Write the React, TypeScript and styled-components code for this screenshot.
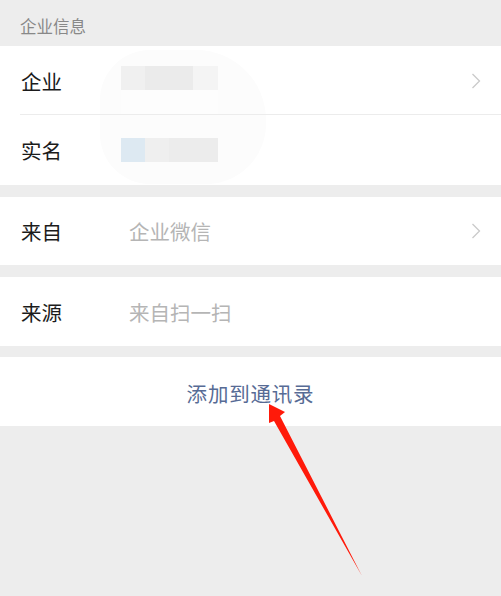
import styled, { createGlobalStyle } from 'styled-components';

const GlobalStyle = createGlobalStyle`
  html, body {
    margin: 0;
    padding: 0;
    background: #ededed;
  }
  body {
    font-family: 'Noto Sans CJK SC', 'Noto Sans', sans-serif;
  }
`;

const Page = styled.div`
  position: relative;
  width: 501px;
  height: 596px;
  overflow: hidden;
  background: #ededed;
`;

const SectionTitle = styled.div`
  height: 46px;
  display: flex;
  align-items: center;
  padding: 6px 0 0 20px;
  box-sizing: border-box;
  font-size: 16.5px;
  color: #888;
`;

const Group = styled.div<{ gapAfter?: number }>`
  position: relative;
  background: #fff;
  margin-bottom: ${({ gapAfter }) => gapAfter ?? 12}px;
`;

const Row = styled.div<{ h?: number; divider?: boolean }>`
  height: ${({ h }) => h ?? 69}px;
  display: flex;
  align-items: center;
  padding: 0 20px 0 21px;
  position: relative;
  box-sizing: border-box;
  ${({ divider }) =>
    divider &&
    `&::after {
      content: '';
      position: absolute;
      left: 20px;
      right: 0;
      bottom: 0;
      height: 1px;
      background: #ececec;
    }`}
`;

const Label = styled.div`
  width: 100px;
  font-size: 20.5px;
  color: #1b1b1b;
  flex-shrink: 0;
`;

const Value = styled.div`
  flex: 1;
  padding-left: 8px;
  font-size: 20.5px;
  color: #b5b5b5;
`;

const Mosaic = styled.div<{ top?: boolean }>`
  flex: 1;
  display: flex;
  flex-direction: column;
  align-self: stretch;
  justify-content: ${({ top }) => (top ? 'flex-start' : 'center')};
  padding-top: ${({ top }) => (top ? 20 : 0)}px;
  position: relative;
`;

const MosaicLine = styled.div<{ fill?: string; h?: number }>`
  display: flex;
  flex-shrink: 0;
  height: ${({ h }) => h ?? 24}px;
  width: 97px;
  background: ${({ fill }) => fill ?? 'transparent'};
`;

const Cell = styled.div<{ w: number; c: string }>`
  width: ${({ w }) => w}px;
  background: ${({ c }) => c};
`;

const Blob = styled.div`
  position: absolute;
  left: 100px;
  top: 4px;
  width: 166px;
  height: 134px;
  border-radius: 50px 70px 60px 50px;
  background: #fcfcfc;
`;

const Chevron = styled.svg`
  width: 10px;
  height: 16px;
`;

const AddButton = styled.div`
  height: 69px;
  background: #fff;
  display: flex;
  align-items: center;
  justify-content: center;
  padding-top: 2px;
  box-sizing: border-box;
  font-size: 20.5px;
  color: #576b95;
  letter-spacing: 0.8px;
`;

const Arrow = styled.svg`
  position: absolute;
  left: 0;
  top: 0;
  width: 501px;
  height: 596px;
  pointer-events: none;
`;

const ChevronIcon = () => (
  <Chevron viewBox="0 0 10 16">
    <path d="M1.5 1 L8.5 8 L1.5 15" fill="none" stroke="#cacaca" strokeWidth="1.3" />
  </Chevron>
);

export default function App() {
  return (
    <Page>
      <GlobalStyle />
      <SectionTitle>企业信息</SectionTitle>
      <Group>
        <Blob />
        <Row divider>
          <Label>企业</Label>
          <Mosaic top>
            <MosaicLine>
              <Cell w={24} c="#f0f0f0" />
              <Cell w={48} c="#ebebeb" />
              <Cell w={25} c="#f4f4f4" />
            </MosaicLine>
            <MosaicLine fill="#fdfdfd" h={25} />
          </Mosaic>
          <ChevronIcon />
        </Row>
        <Row h={70}>
          <Label>实名</Label>
          <Mosaic>
            <MosaicLine>
              <Cell w={24} c="#dde9f2" />
              <Cell w={24} c="#efefef" />
              <Cell w={49} c="#ececec" />
            </MosaicLine>
          </Mosaic>
        </Row>
      </Group>
      <Group>
        <Row h={68}>
          <Label>来自</Label>
          <Value>企业微信</Value>
          <ChevronIcon />
        </Row>
      </Group>
      <Group gapAfter={11}>
        <Row>
          <Label>来源</Label>
          <Value>来自扫一扫</Value>
        </Row>
      </Group>
      <AddButton>添加到通讯录</AddButton>
      <Arrow viewBox="0 0 501 596">
        <path d="M269 404 L285 412 L280 416 L362 576 L274 421 L269 423 Z" fill="#ff1a0a" />
      </Arrow>
    </Page>
  );
}
